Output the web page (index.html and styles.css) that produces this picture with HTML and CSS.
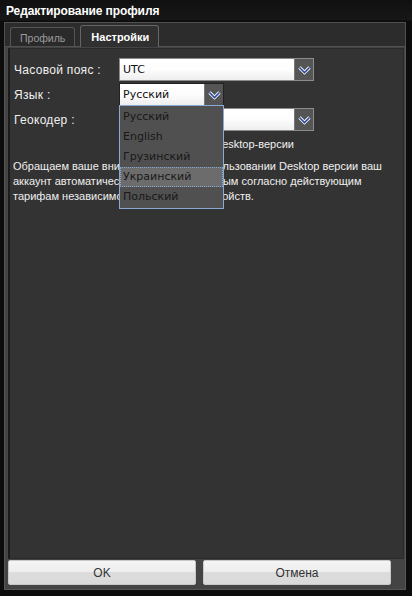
FILE: index.html
```html
<!DOCTYPE html>
<html>
<head>
<meta charset="utf-8">
<link rel="stylesheet" href="styles.css">
</head>
<body>
<div class="window">
  <div class="title">Редактирование профиля</div>
  <div class="frame">
    <div class="tabs">
      <div class="tab">Профиль</div>
      <div class="tab active">Настройки</div>
    </div>
    <div class="panel">
      <div class="row">
        <div class="label">Часовой пояс :</div>
        <div class="select wide"><span class="val">UTC</span><span class="arrow"><svg width="13" height="9" viewBox="0 0 13 9"><path d="M1.5 1.5 L6.5 6.5 L11.5 1.5" fill="none" stroke="#fff" stroke-width="3.2"/><path d="M1.5 1.5 L6.5 6.5 L11.5 1.5" fill="none" stroke="#2b4a9c" stroke-width="1.6"/></svg></span></div>
      </div>
      <div class="row">
        <div class="label">Язык :</div>
        <div class="langwrap">
          <div class="select narrow open"><span class="val">Русский</span><span class="arrow"><svg width="13" height="9" viewBox="0 0 13 9"><path d="M1.5 1.5 L6.5 6.5 L11.5 1.5" fill="none" stroke="#fff" stroke-width="3.2"/><path d="M1.5 1.5 L6.5 6.5 L11.5 1.5" fill="none" stroke="#2b4a9c" stroke-width="1.6"/></svg></span></div>
          <ul class="list">
            <li>Русский</li>
            <li>English</li>
            <li>Грузинский</li>
            <li class="hl">Украинский</li>
            <li>Польский</li>
          </ul>
        </div>
      </div>
      <div class="row">
        <div class="label">Геокодер :</div>
        <div class="select wide"><span class="val"></span><span class="arrow"><svg width="13" height="9" viewBox="0 0 13 9"><path d="M1.5 1.5 L6.5 6.5 L11.5 1.5" fill="none" stroke="#fff" stroke-width="3.2"/><path d="M1.5 1.5 L6.5 6.5 L11.5 1.5" fill="none" stroke="#2b4a9c" stroke-width="1.6"/></svg></span></div>
      </div>
      <div class="check"><span class="box"></span><span class="ctext">Вход из Desktop-версии</span></div>
      <p class="note">Обращаем ваше внимание, что при использовании Desktop версии ваш аккаунт автоматически становится платным согласно действующим тарифам независимо от количества устройств.</p>
    </div>
    <div class="buttons">
      <button class="btn">OK</button>
      <button class="btn">Отмена</button>
    </div>
  </div>
</div>
</body>
</html>
```
FILE: styles.css
```css
* { box-sizing: border-box; }
html, body { margin: 0; padding: 0; }
body {
  width: 412px;
  height: 596px;
  background: #0e0e0e;
  font-family: "Liberation Sans", Arial, sans-serif;
  overflow: hidden;
}
.window {
  width: 412px;
  height: 596px;
  display: flex;
  flex-direction: column;
  background: linear-gradient(#101010, #171717 20px, #0c0c0c 21px);
}
.title {
  height: 21px;
  padding: 4px 0 0 6px;
  color: #fff;
  font-weight: bold;
  font-size: 12px;
  letter-spacing: -0.1px;
}
.frame {
  margin: 1px 6px 6px 4px;
  flex: 1;
  display: flex;
  flex-direction: column;
  background: #444;
  border: 1px solid #555;
  border-top: none;
}
.tabs {
  height: 25px;
  background: #2c2c2c;
  border: 1px solid #505050;
  margin: 0 -1px;
  display: flex;
  align-items: flex-end;
  padding-left: 5px;
  gap: 5px;
}
.tab {
  height: 19px;
  padding: 4px 9px 0 9px;
  border: 1px solid #555;
  border-bottom: none;
  border-radius: 3px 3px 0 0;
  background: #2a2a2a;
  color: #9a9a9a;
  font-size: 10.5px;
}
.tab.active {
  height: 22px;
  padding: 5px 9px 0 10px;
  color: #fff;
  font-weight: bold;
  font-size: 11px;
  background: #303030;
  border-color: #666;
  margin-bottom: -1px;
}
.panel {
  height: 511px;
  margin: 1px 1px 0 3px;
  background: #333;
  border: 1px solid #2a2a2a;
  border-left: 2px solid #1c1c1c;
  padding: 8px 0 0 3px;
  color: #f0f0f0;
  font-size: 11px;
}
.row {
  display: flex;
  align-items: center;
  height: 25px;
}
.label {
  width: 106px;
  font-size: 12px;
  letter-spacing: 0.3px;
  padding-left: 1px;
}
.select {
  height: 23px;
  display: flex;
  border: 1px solid #8c8c8c;
  background: linear-gradient(#fff, #fdfdfd 50%, #eee);
}
.select.wide { width: 195px; }
.select.narrow { width: 105px; border-color: #222; }
.val {
  flex: 1;
  padding: 4px 0 0 3px;
  color: #111;
  font-family: "DejaVu Sans", sans-serif;
  font-size: 11px;
}
.arrow {
  width: 19px;
  background: #555;
  border-left: 1px solid #777;
  display: flex;
  align-items: center;
  justify-content: center;
  padding-top: 1px;
}
.langwrap { position: relative; }
.list {
  position: absolute;
  top: 22px;
  left: 0;
  width: 105px;
  margin: 0;
  padding: 1px 0;
  list-style: none;
  background: #505050;
  border: 1px solid #8aaad6;
  z-index: 5;
}
.list li {
  height: 20px;
  padding: 3px 0 0 3px;
  color: #181818;
  font-family: "DejaVu Sans", sans-serif;
  font-size: 11px;
}
.list li.hl {
  background: #6c6c6c;
  outline: 1px dotted #8aaad6;
  outline-offset: -1px;
}
.check {
  width: 281px;
  margin-top: 6px;
  display: flex;
  justify-content: flex-end;
  align-items: center;
  gap: 4px;
  font-size: 11px;
}
.box {
  width: 12px;
  height: 12px;
  background: #fff;
  border: 1px solid #888;
}
.note {
  margin: 9px 10px 0 0;
  font-size: 11px;
  line-height: 15px;
}
.buttons {
  flex: 1;
  display: flex;
  gap: 7px;
  padding: 1px 12px 0 3px;
}
.btn {
  width: 188px;
  height: 25px;
  border: 1px solid #c8c8c8;
  border-radius: 2px;
  background: linear-gradient(#f4f4f4, #ededed 50%, #dcdcdc 50%, #dadada);
  color: #333;
  font-family: "Liberation Sans", Arial, sans-serif;
  font-size: 12px;
  padding: 0;
}
```
